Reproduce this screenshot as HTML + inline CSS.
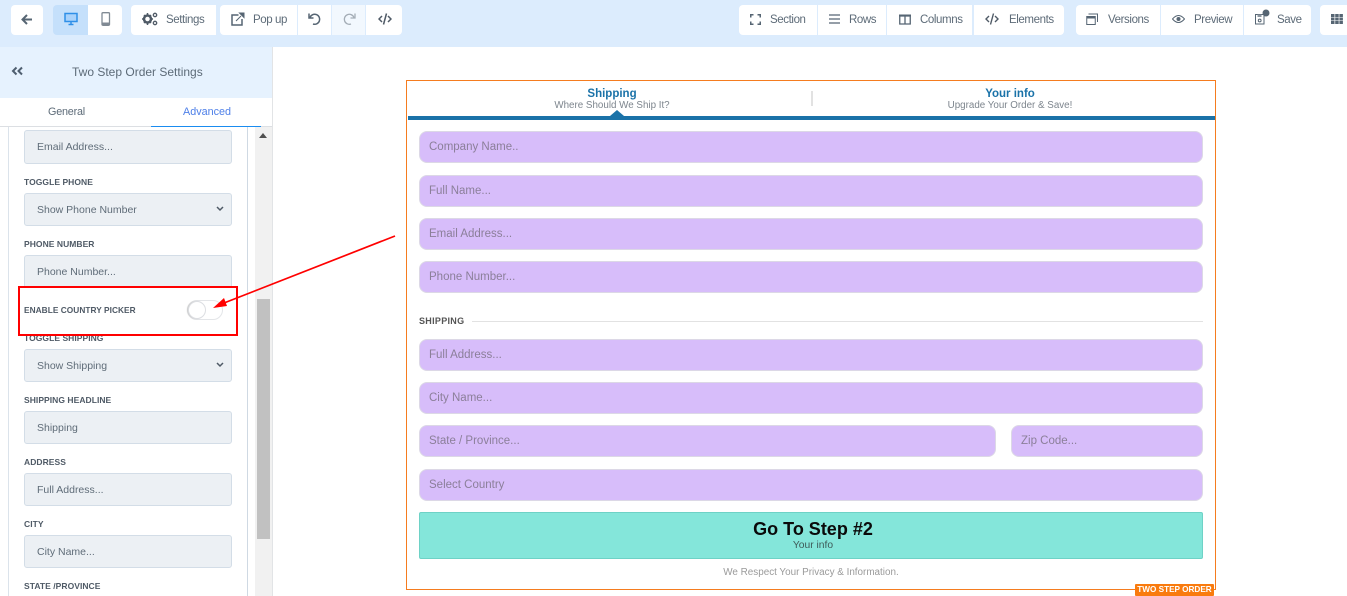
<!DOCTYPE html>
<html><head><meta charset="utf-8"><style>
html,body{margin:0;padding:0;width:1347px;height:596px;overflow:hidden;background:#fff;font-family:"Liberation Sans",sans-serif;}
div,svg,span.a{position:absolute;box-sizing:border-box}
.t{white-space:nowrap;line-height:14px;height:14px}
.b{background:#fff;top:5px;height:30px}
.bl{font-size:11.5px;color:#5d6b78;top:13px;letter-spacing:-.4px}
.ic{top:10px}
.lab{left:24px;font-size:8.5px;font-weight:bold;color:#4f5a66;letter-spacing:.05px}
.f{left:24px;width:208px;height:34px;background:#ecf0f4;border:1px solid #d3dde7;border-radius:3px}
.ft{left:37px;font-size:10.5px;color:#5f6c78}
.in{background:#d7bdfa;border:1px solid #dcd8e6;border-radius:8px;height:32px;left:419px;width:784px}
.it{left:429px;font-size:11.5px;color:#8b7f99}
</style></head><body>
<div style="left:0;top:0;width:1347px;height:47px;background:#dcecfd"></div>

<!-- toolbar left -->
<div class="b" style="left:11px;width:32px;border-radius:4px"></div>
<svg class="ic" style="left:19px;top:12px" width="16" height="16" viewBox="0 0 16 16"><path d="M13 7.500H4M8 3L3.500 7.500 8 12" fill="none" stroke="#566573" stroke-width="2"/></svg>
<div class="b" style="left:53px;width:35px;background:#c5e0fb;border-radius:4px 0 0 4px"></div>
<div class="b" style="left:88px;width:34px;border-radius:0 4px 4px 0"></div>
<svg class="ic" style="left:64px;top:12px" width="14" height="14" viewBox="0 0 14 14"><path d="M1 1.500h12v8H1z" fill="#a9d2fb" stroke="#2f8fe8" stroke-width="1.500"/><path d="M4.500 12.500h5M7 10v2" stroke="#2f8fe8" stroke-width="1.500"/></svg>
<svg class="ic" style="left:101px;top:12px" width="10" height="15" viewBox="0 0 10 15"><rect x="1" y=".7" width="7.500" height="12.600" rx="1" fill="none" stroke="#808a94" stroke-width="1.300"/><path d="M1.500 10.500h6.500v2.500H1.500z" fill="#808a94"/></svg>

<div class="b" style="left:131px;width:85px;border-radius:4px 0 0 4px"></div>
<svg class="ic" style="left:142px;top:12px" width="16" height="14" viewBox="0 0 16 14"><circle cx="5.500" cy="7" r="3.500" fill="none" stroke="#4f5a66" stroke-width="2.500"/><path d="M5.500 1v2M5.500 11v2M0 7h2M9 7h2M2 3l1 1M8 10l1 1M2 11l1-1M8 4l1-1" stroke="#4f5a66" stroke-width="1.500"/><circle cx="13" cy="3" r="1.700" fill="none" stroke="#4f5a66" stroke-width="1.300"/><circle cx="13" cy="11" r="1.700" fill="none" stroke="#4f5a66" stroke-width="1.300"/></svg>
<div class="t bl" style="left:166px">Settings</div>

<div class="b" style="left:220px;width:77px;border-radius:4px 0 0 4px"></div>
<svg class="ic" style="left:231px;top:12px" width="14" height="14" viewBox="0 0 14 14"><path d="M7.500 3H1v10h10V7" fill="none" stroke="#566573" stroke-width="1.500"/><path d="M5 9l5-5M8.500 1H13v4.500z" fill="#566573" stroke="#566573"/></svg>
<div class="t bl" style="left:253px">Pop up</div>

<div class="b" style="left:298px;width:33px"></div>
<svg class="ic" style="left:307px;top:12px" width="15" height="14" viewBox="0 0 15 14"><path d="M3 5.500A5 5 0 1 1 6 12" fill="none" stroke="#566573" stroke-width="1.500"/><path d="M2 1.500v4.500h4.500" fill="none" stroke="#566573" stroke-width="1.500"/></svg>
<div class="b" style="left:332px;width:33px;background:#f2f8fe"></div>
<svg class="ic" style="left:342px;top:12px" width="15" height="14" viewBox="0 0 15 14"><path d="M12 5.500A5 5 0 1 0 9 12" fill="none" stroke="#a4adb6" stroke-width="1.300"/><path d="M13 1.500v4.500H8.500" fill="none" stroke="#a4adb6" stroke-width="1.300"/></svg>
<div class="b" style="left:366px;width:36px;border-radius:0 4px 4px 0"></div>
<svg class="ic" style="left:378px;top:13px" width="14" height="12" viewBox="0 0 14 12"><path d="M4 3L1 6l3 3M10 3l3 3-3 3M8.500 .5L5.500 11.500" fill="none" stroke="#4f5a66" stroke-width="1.500"/></svg>

<!-- toolbar right -->
<div class="b" style="left:739px;width:78px;border-radius:4px 0 0 4px"></div>
<svg class="ic" style="left:750px;top:14px" width="11" height="11" viewBox="0 0 11 11"><path d="M.75 3.500V.75H3.500M7.500 .75h2.750V3.500M.75 7.500v2.750H3.500M7.500 10.250h2.750V7.500" fill="none" stroke="#566573" stroke-width="1.500"/></svg>
<div class="t bl" style="left:770px">Section</div>
<div class="b" style="left:818px;width:68px"></div>
<svg class="ic" style="left:829px;top:14px" width="11" height="10" viewBox="0 0 11 10"><path d="M0 1h11M0 5h11M0 9h11" stroke="#566573" stroke-width="1.200"/></svg>
<div class="t bl" style="left:849px">Rows</div>
<div class="b" style="left:887px;width:85px"></div>
<svg class="ic" style="left:899px;top:14px" width="12" height="11" viewBox="0 0 12 11"><path d="M.75 2h10.500v8H.75zM6 2v8" fill="none" stroke="#566573" stroke-width="1.300"/><path d="M0 .5h12v2H0z" fill="#566573"/></svg>
<div class="t bl" style="left:920px">Columns</div>
<div class="b" style="left:974px;width:90px;border-radius:0 4px 4px 0"></div>
<svg class="ic" style="left:985px;top:13px" width="14" height="12" viewBox="0 0 14 12"><path d="M4 3L1 6l3 3M10 3l3 3-3 3M8.500 .5L5.500 11.500" fill="none" stroke="#4f5a66" stroke-width="1.400"/></svg>
<div class="t bl" style="left:1009px">Elements</div>

<div class="b" style="left:1076px;width:84px;border-radius:4px 0 0 4px"></div>
<svg class="ic" style="left:1086px;top:13px" width="12" height="12" viewBox="0 0 12 12"><path d="M.75 3.500h8.500v8H.75z" fill="none" stroke="#566573"/><path d="M.5 3h9v2.500h-9z" fill="#566573"/><path d="M2.500 1h9v8" fill="none" stroke="#566573"/></svg>
<div class="t bl" style="left:1108px">Versions</div>
<div class="b" style="left:1161px;width:82px"></div>
<svg class="ic" style="left:1172px;top:14px" width="13" height="10" viewBox="0 0 13 10"><path d="M.5 5Q6.500-2 12.500 5Q6.500 12 .5 5z" fill="none" stroke="#566573"/><circle cx="6.500" cy="5" r="2" fill="#566573"/></svg>
<div class="t bl" style="left:1194px">Preview</div>
<div class="b" style="left:1244px;width:67px;border-radius:0 4px 4px 0"></div>
<svg class="ic" style="left:1255px;top:9px" width="16" height="16" viewBox="0 0 16 16"><path d="M.5 5.500h8.500v9.500H.5z" fill="none" stroke="#566573"/><path d="M2.500 5.500h4v2.500h-4z" fill="#8a949e"/><circle cx="4.700" cy="11.500" r="1.400" fill="none" stroke="#566573"/><circle cx="11" cy="4" r="3.500" fill="#566573"/></svg>
<div class="t bl" style="left:1277px">Save</div>
<div class="b" style="left:1320px;width:27px;border-radius:4px 0 0 4px"></div>
<svg class="ic" style="left:1331px;top:14px" width="12" height="10" viewBox="0 0 12 10"><path d="M0 0h3.500v3H0zM4.200 0h3.500v3H4.200zM8.400 0h3.500v3H8.400zM0 3.500h3.500v3H0zM4.200 3.500h3.500v3H4.200zM8.400 3.500h3.500v3H8.400zM0 7h3.500v3H0zM4.200 7h3.500v3H4.200zM8.400 7h3.500v3H8.400z" fill="#566573"/></svg>

<!-- sidebar -->
<div style="left:0;top:47px;width:272px;height:51px;background:#e6f2fe"></div>
<svg style="left:11px;top:65px" width="13" height="12" viewBox="0 0 13 12"><path d="M5.500 2.500L2 6l3.500 3.500M11 2.500L7.500 6 11 9.500" fill="none" stroke="#4f5f70" stroke-width="2"/></svg>
<div class="t" style="left:72px;top:65px;font-size:12px;color:#5d6b78">Two Step Order Settings</div>
<div class="t" style="left:48px;top:105px;font-size:10.800px;color:#5d6b78;letter-spacing:-.2px">General</div>
<div class="t" style="left:183px;top:105px;font-size:10.800px;color:#4d7fe8">Advanced</div>
<div style="left:0;top:126px;width:272px;height:1px;background:#dcdfe3"></div>
<div style="left:151px;top:126px;width:110px;height:1px;background:#1a8cf0"></div>
<div style="left:272px;top:47px;width:1px;height:549px;background:#e2e4e6"></div>
<div style="left:8px;top:127px;width:1px;height:469px;background:#dbe3eb"></div>
<div style="left:247px;top:127px;width:1px;height:469px;background:#cfd9e3"></div>
<div style="left:255px;top:127px;width:17px;height:469px;background:#f1f1f1"></div>
<div style="left:257px;top:299px;width:13px;height:240px;background:#c1c1c1"></div>
<svg style="left:259px;top:133px" width="8" height="5" viewBox="0 0 8 5"><path d="M0 5L4 0l4 5z" fill="#505050"/></svg>

<div class="f" style="top:130px"></div><div class="t ft" style="top:140px">Email Address...</div>
<div class="t lab" style="top:175px">TOGGLE PHONE</div>
<div class="f" style="top:193px;height:33px"></div><div class="t ft" style="top:203px">Show Phone Number</div>
<svg style="left:216px;top:206px" width="8" height="6" viewBox="0 0 8 6"><path d="M1 1l3 3 3-3" fill="none" stroke="#4f5a66" stroke-width="1.500"/></svg>
<div class="t lab" style="top:237px">PHONE NUMBER</div>
<div class="f" style="top:255px;height:33px"></div><div class="t ft" style="top:265px">Phone Number...</div>
<div style="left:9px;top:288px;width:238px;height:48px;background:#fff"></div>
<div class="t lab" style="top:303px;font-size:8.300px">ENABLE COUNTRY PICKER</div>
<div style="left:187px;top:300px;width:36px;height:20px;background:#fff;border:1px solid #e3e5e8;border-radius:10px"></div>
<div style="left:188px;top:301px;width:18px;height:18px;background:#fff;border:1.500px solid #dcdee2;border-radius:50%;box-shadow:-1px 0 1px #ccc"></div>
<div class="t lab" style="top:331px">TOGGLE SHIPPING</div>
<div class="f" style="top:349px;height:33px"></div><div class="t ft" style="top:359px">Show Shipping</div>
<svg style="left:216px;top:362px" width="8" height="6" viewBox="0 0 8 6"><path d="M1 1l3 3 3-3" fill="none" stroke="#4f5a66" stroke-width="1.500"/></svg>
<div class="t lab" style="top:393px">SHIPPING HEADLINE</div>
<div class="f" style="top:411px;height:33px"></div><div class="t ft" style="top:421px">Shipping</div>
<div class="t lab" style="top:455px">ADDRESS</div>
<div class="f" style="top:473px;height:33px"></div><div class="t ft" style="top:483px">Full Address...</div>
<div class="t lab" style="top:517px">CITY</div>
<div class="f" style="top:535px;height:33px"></div><div class="t ft" style="top:545px">City Name...</div>
<div class="t lab" style="top:579px">STATE /PROVINCE</div>

<!-- form -->
<div style="left:406px;top:80px;width:810px;height:510px;border:1px solid #f57c1f"></div>
<div style="left:408px;top:116px;width:807px;height:4px;background:#1a72a8"></div>
<svg style="left:610px;top:110px" width="14" height="6" viewBox="0 0 14 6"><path d="M0 6L7 0l7 6z" fill="#1a72a8"/></svg>
<div style="left:811px;top:91px;width:2px;height:15px;background:#e2e2e2"></div>
<div class="t" style="left:512px;width:200px;text-align:center;top:87px;font-size:11.500px;font-weight:bold;color:#1a72a8">Shipping</div>
<div class="t" style="left:512px;width:200px;text-align:center;top:99px;font-size:9.800px;color:#7d858d">Where Should We Ship It?</div>
<div class="t" style="left:910px;width:200px;text-align:center;top:87px;font-size:11.500px;font-weight:bold;color:#1a72a8">Your info</div>
<div class="t" style="left:910px;width:200px;text-align:center;top:99px;font-size:9.800px;color:#7d858d">Upgrade Your Order &amp; Save!</div>

<div class="in" style="top:131px"></div><div class="t it" style="top:140px">Company Name..</div>
<div class="in" style="top:175px"></div><div class="t it" style="top:184px">Full Name...</div>
<div class="in" style="top:218px"></div><div class="t it" style="top:227px">Email Address...</div>
<div class="in" style="top:261px"></div><div class="t it" style="top:270px">Phone Number...</div>
<div class="t" style="left:419px;top:314px;font-size:9px;font-weight:bold;color:#555;letter-spacing:.3px">SHIPPING</div>
<div style="left:472px;top:321px;width:731px;height:1px;background:#e2e2e2"></div>
<div class="in" style="top:339px"></div><div class="t it" style="top:348px">Full Address...</div>
<div class="in" style="top:382px"></div><div class="t it" style="top:391px">City Name...</div>
<div class="in" style="top:425px;width:577px"></div><div class="t it" style="top:434px">State / Province...</div>
<div class="in" style="top:425px;left:1011px;width:192px"></div><div class="t it" style="top:434px;left:1021px">Zip Code...</div>
<div class="in" style="top:469px"></div><div class="t it" style="top:478px">Select Country</div>
<div style="left:419px;top:512px;width:784px;height:47px;background:#84e6da;border:1px solid #6ed2c6;border-radius:2px"></div>
<div class="t" style="left:419px;width:788px;text-align:center;top:522px;font-size:18px;font-weight:bold;color:#0a0a0a">Go To Step #2</div>
<div class="t" style="left:419px;width:788px;text-align:center;top:539px;font-size:10.300px;color:#3e5a58">Your info</div>
<div class="t" style="left:419px;width:784px;text-align:center;top:566px;font-size:9.900px;color:#9a9a9a">We Respect Your Privacy &amp; Information.</div>
<div class="t" style="left:1135px;top:584px;width:79px;height:12px;line-height:12px;background:#f97b0e;color:#fff;font-size:8.200px;font-weight:bold;text-align:center;border-radius:1px">TWO STEP ORDER</div>

<!-- annotation -->
<div style="left:18px;top:286px;width:220px;height:50px;border:2.500px solid #f00"></div>
<svg style="left:0;top:0" width="1347" height="596" viewBox="0 0 1347 596"><path d="M395 236L224 303" stroke="#f00" stroke-width="1.700" fill="none"/><path d="M213 308L224 298L227 306z" fill="#f00"/></svg>
</body></html>
